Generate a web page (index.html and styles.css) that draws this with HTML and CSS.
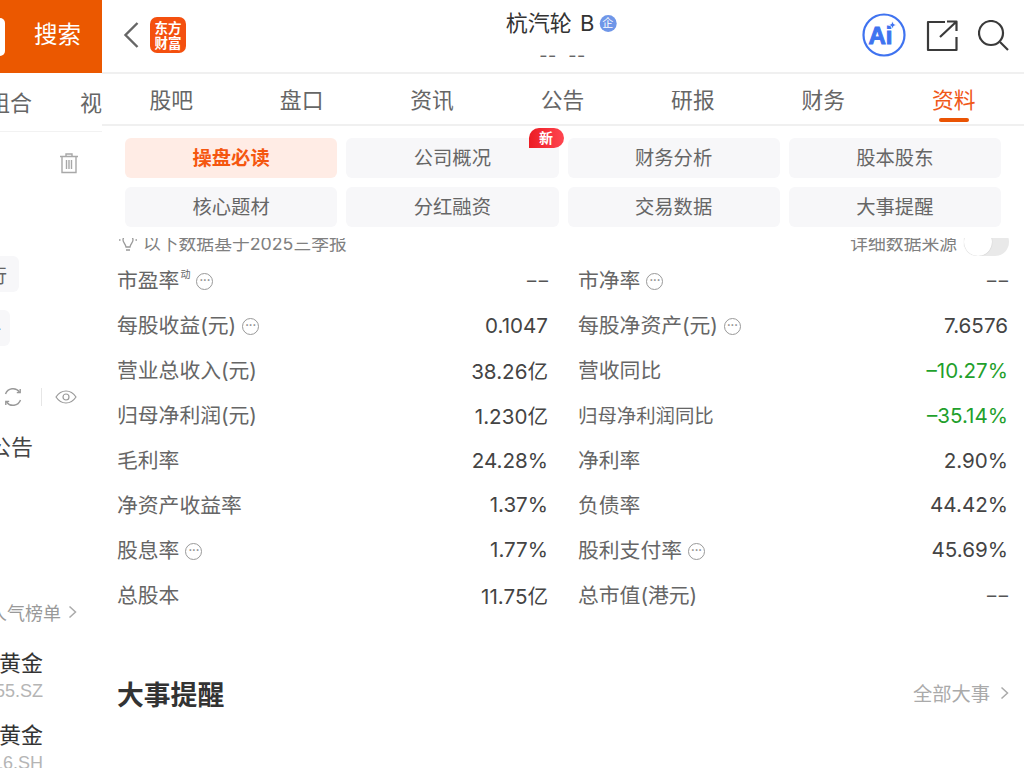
FILE: index.html
```html
<!DOCTYPE html>
<html lang="zh-CN">
<head>
<meta charset="utf-8">
<title>杭汽轮B</title>
<link rel="stylesheet" href="styles.css">
</head>
<body>
<div class="app">
  <aside class="side">
    <div class="side-head"><span class="side-field"></span><span class="side-search">搜索</span></div>
    <div class="side-tabs"><span class="side-tab-a">组合</span><span class="side-tab-b">视频</span></div>
    <div class="side-trash">
      <svg width="20" height="22" viewBox="0 0 20 22" fill="none" stroke="#a8a8a8" stroke-width="1.4"><path d="M1 4.500h18M7 4.500V2h6v2.500M3 4.500V20.500h14V4.500M7.500 8v9M10 8v9M12.500 8v9"/></svg>
    </div>
    <div class="side-chip side-chip-a"><span>银行</span></div>
    <div class="side-chip side-chip-b"><span>一</span></div>
    <div class="side-tools">
      <svg width="20" height="20" viewBox="0 0 20 20" fill="none" stroke="#999" stroke-width="1.400"><path d="M2.500 7A8 8 0 0 1 16.500 5M17.500 13A8 8 0 0 1 3.500 15"/><path d="M17.200 2v3.600h-3.400M2.800 18v-3.600h3.400"/></svg>
      <span class="side-divider"></span>
      <svg width="22" height="14" viewBox="0 0 22 14" fill="none" stroke="#9a9a9a" stroke-width="1.200"><path d="M1 7C4 2.500 7.500 1 11 1s7 1.500 10 6c-3 4.500-6.500 6-10 6S4 11.500 1 7z"/><circle cx="11" cy="7" r="3"/></svg>
    </div>
    <div class="side-title"><span>公告</span></div>
    <div class="side-rank"><span>人气榜单</span><svg width="9" height="14" viewBox="0 0 9 14" fill="none" stroke="#aaa" stroke-width="1.500"><path d="M1.500 1.500 7.500 7l-6 5.500"/></svg></div>
    <div class="side-stock"><span class="side-name">黄金</span><span class="side-code">159855.SZ</span></div>
    <div class="side-stock"><span class="side-name">黄金</span><span class="side-code">518716.SH</span></div>
  </aside>
  <main class="main">
    <header class="top">
      <div class="top-left">
        <svg class="back" width="16" height="28" viewBox="0 0 16 28" fill="none" stroke="#666" stroke-width="2.400"><path d="M14.500 2 2.500 14l12 12"/></svg>
        <span class="logo"><span>东方</span><span>财富</span></span>
      </div>
      <div class="top-center">
        <div class="stock-name"><span class="stock-text">杭汽轮 B</span><span class="qi">企</span></div>
        <div class="stock-sub">-- --</div>
      </div>
      <div class="top-right">
        <svg width="44" height="44" viewBox="0 0 44 44" fill="none"><circle cx="22" cy="22" r="20.500" stroke="#3f73f0" stroke-width="2.200"/><text x="6.500" y="31" font-family="Liberation Sans" font-weight="700" font-size="24" fill="#3f73f0" stroke="#3f73f0" stroke-width="1">Ai</text><path d="M30.500 8l1.200 2.800 2.800 1.200-2.800 1.200-1.200 2.800-1.200-2.800-2.800-1.200 2.800-1.200z" fill="#3f73f0" stroke="#fff" stroke-width=".8"/></svg>
        <svg width="32" height="32" viewBox="0 0 32 32" fill="none" stroke="#3a3a3a" stroke-width="2.200" stroke-linejoin="round"><path d="M19 2H2v28h28.500V17"/><path d="M14 17 30 2M21 1.500h9.500V11"/></svg>
        <svg width="32" height="32" viewBox="0 0 32 32" fill="none" stroke="#3a3a3a" stroke-width="2.200"><circle cx="13" cy="13" r="12"/><path d="M22 22l8 8"/></svg>
      </div>
    </header>
    <nav class="tabs">
      <span class="tab">股吧</span>
      <span class="tab">盘口</span>
      <span class="tab">资讯</span>
      <span class="tab">公告</span>
      <span class="tab">研报</span>
      <span class="tab">财务</span>
      <span class="tab tab-on">资料</span>
    </nav>
    <section class="chips">
      <span class="chip chip-on">操盘必读</span>
      <span class="chip chip-new">公司概况<span class="badge">新</span></span>
      <span class="chip">财务分析</span>
      <span class="chip">股本股东</span>
      <span class="chip">核心题材</span>
      <span class="chip">分红融资</span>
      <span class="chip">交易数据</span>
      <span class="chip">大事提醒</span>
    </section>
    <div class="note">
      <div class="note-inner">
        <div class="note-left">
          <svg width="20" height="22" viewBox="0 0 20 22" fill="none" stroke="#999" stroke-width="1.300"><path d="M5 9a5 5 0 0 1 10 0c0 2.500-2.500 3.500-3 7H8c-.5-3.500-3-4.500-3-7zM1 9h1.500M17.500 9H19M8 19h4"/></svg>
          <span>以下数据基于2025三季报</span>
        </div>
        <div class="note-right">
          <span>详细数据来源</span>
          <span class="switch"><span class="knob"></span></span>
        </div>
      </div>
    </div>
    <section class="grid">
      <div class="row"><span class="label">市盈率<sup class="sup">动</sup><i class="more"></i></span><span class="val val-dash">––</span></div>
      <div class="row"><span class="label">市净率<i class="more"></i></span><span class="val val-dash">––</span></div>
      <div class="row"><span class="label">每股收益(元)<i class="more"></i></span><span class="val">0.1047</span></div>
      <div class="row"><span class="label">每股净资产(元)<i class="more"></i></span><span class="val">7.6576</span></div>
      <div class="row"><span class="label">营业总收入(元)</span><span class="val">38.26亿</span></div>
      <div class="row"><span class="label">营收同比</span><span class="val val-down">–10.27%</span></div>
      <div class="row"><span class="label">归母净利润(元)</span><span class="val">1.230亿</span></div>
      <div class="row"><span class="label label-fit">归母净利润同比</span><span class="val val-down">–35.14%</span></div>
      <div class="row"><span class="label">毛利率</span><span class="val">24.28%</span></div>
      <div class="row"><span class="label">净利率</span><span class="val">2.90%</span></div>
      <div class="row"><span class="label">净资产收益率</span><span class="val">1.37%</span></div>
      <div class="row"><span class="label">负债率</span><span class="val">44.42%</span></div>
      <div class="row"><span class="label">股息率<i class="more"></i></span><span class="val">1.77%</span></div>
      <div class="row"><span class="label">股利支付率<i class="more"></i></span><span class="val">45.69%</span></div>
      <div class="row"><span class="label">总股本</span><span class="val">11.75亿</span></div>
      <div class="row"><span class="label">总市值(港元)</span><span class="val val-dash">––</span></div>
    </section>
    <section class="events">
      <h2 class="events-title">大事提醒</h2>
      <div class="events-all"><span>全部大事</span><svg width="9" height="14" viewBox="0 0 9 14" fill="none" stroke="#aaa" stroke-width="1.500"><path d="M1.500 1.500 7.500 7l-6 5.500"/></svg></div>
    </section>
  </main>
</div>
</body>
</html>
```
FILE: styles.css
```css
* { box-sizing: border-box; }
html, body { margin: 0; padding: 0; height: 100%; overflow: hidden; background: #fff; }
body { font-family: "Inter", "Noto Sans CJK SC", sans-serif; color: #333; }
.app { display: flex; width: 1024px; height: 768px; overflow: hidden; }

/* left, cut-off panel */
.side { width: 102px; flex: none; height: 768px; overflow: hidden; display: flex; flex-direction: column; }
.side > * { flex: none; }
.side-head { height: 73px; background: #eb5800; display: flex; align-items: center; }
.side-field { width: 5px; height: 38px; background: #fff; border-radius: 0 6px 6px 0; margin-right: 29px; }
.side-search { color: #fff; font-size: 23.500px; line-height: 28px; padding-bottom: 3px; white-space: nowrap; }
.side-tabs { height: 59px; border-bottom: 1px solid #f2f2f2; display: flex; font-size: 22px; color: #666; white-space: nowrap; overflow: hidden; justify-content: flex-end; padding-top: 12px; }
.side-tab-a { margin-right: 48px; }
.side-tab-b { margin-right: -22px; }
.side-trash { height: 124px; padding: 20px 0 0 59px; }
.side-chip { display: flex; justify-content: flex-end; background: #f7f7f9; border-radius: 0 6px 6px 0; height: 36px; align-items: center; font-size: 19px; color: #666; white-space: nowrap; overflow: hidden; }
.side-chip-a { width: 19px; padding-right: 12px; }
.side-chip-b { width: 10px; margin-top: 18px; padding-right: 9px; }
.side-chip span { flex: none; }
.side-tools { height: 24px; margin-top: 39px; display: flex; align-items: center; padding-left: 3px; }
.side-divider { width: 1px; height: 18px; background: #e6e6e6; margin: 0 13px 0 18px; }
.side-title { height: 36px; margin-top: 20px; display: flex; justify-content: flex-end; padding-right: 69px; font-size: 22px; line-height: 36px; color: #444; white-space: nowrap; }
.side-title span { flex: none; }
.side-rank { height: 28px; margin-top: 133px; display: flex; justify-content: flex-end; align-items: center; gap: 7px; padding-right: 25px; font-size: 18px; color: #999; white-space: nowrap; }
.side-rank span { flex: none; }
.side-rank svg { flex: none; }
.side-stock { height: 72px; display: flex; flex-direction: column; align-items: flex-end; padding-right: 59px; white-space: nowrap; }
.side-rank + .side-stock { margin-top: 22px; }
.side-name { font-size: 22px; line-height: 30px; color: #333; }
.side-code { font-family: "Liberation Sans", sans-serif; font-size: 18px; line-height: 26px; color: #b5b5b5; }

/* main */
.main { flex: 1; min-width: 0; height: 768px; overflow: hidden; }
.top { height: 74px; border-bottom: 2px solid #f0f0f0; position: relative; display: flex; justify-content: space-between; align-items: center; padding: 0 14px 2px 21px; }
.top-left { display: flex; align-items: center; gap: 11px; }
.back { display: block; }
.logo { width: 36px; height: 36px; background: #f4500f; border-radius: 7px; display: flex; flex-direction: column; align-items: center; justify-content: center; color: #fff; font-family: "Noto Sans CJK SC", sans-serif; font-weight: 700; font-size: 13.500px; line-height: 15px; }
.top-center { position: absolute; left: 459px; top: 8px; transform: translateX(-50%); white-space: nowrap; text-align: center; }
.stock-name { display: flex; align-items: center; font-size: 22px; line-height: 30px; color: #333; }
.stock-text { word-spacing: 2px; }
.qi { width: 17px; height: 17px; border-radius: 50%; background: #6f96e8; color: #fff; font-size: 11px; line-height: 17px; text-align: center; margin-left: 5px; }
.stock-sub { font-size: 18px; line-height: 22px; color: #666; letter-spacing: .5px; word-spacing: 6px; margin-top: 7px; padding-left: 3px; }
.top-right { display: flex; align-items: center; gap: 20px; }
.top-right svg:nth-child(n+2) { margin-top: 1px; }
.tabs { display: flex; height: 52px; padding: 0 5px 0 4px; border-bottom: 2px solid #f0f0f0; }
.tab { flex: 1; text-align: center; font-size: 21.800px; line-height: 52px; color: #666; position: relative; }
.tab-on { color: #f0591a; }
.tab-on::after { content: ""; position: absolute; left: 50%; bottom: 2px; width: 30px; height: 4px; margin-left: -15px; border-radius: 2px; background: #ea5404; }
.chips { display: grid; grid-template-columns: repeat(4, 1fr); gap: 9px; padding: 12px 23px 11px; }
.chip { height: 40px; display: flex; align-items: center; justify-content: center; padding-bottom: 2px; background: #f7f7f9; border-radius: 6px; font-size: 19.300px; color: #666; position: relative; }
.chip-on { background: #ffece5; color: #f5560f; font-weight: 700; }
.badge { position: absolute; right: -5px; top: -10px; width: 35px; height: 20px; background: linear-gradient(90deg, #ec1c24, #ff4650); color: #fff; font-size: 14px; font-weight: 700; line-height: 20px; text-align: center; border-radius: 10px 10px 10px 0; }
.note { height: 18px; overflow: hidden; padding: 0 15px 0 16px; font-size: 17.800px; color: #808080; }
.note-inner { height: 28px; margin-top: -10px; display: flex; justify-content: space-between; align-items: center; }
.note-left, .note-right { display: flex; align-items: center; gap: 5px; }
.note-right { gap: 7px; }
.switch { width: 45px; height: 28px; background: #e9e9e9; border-radius: 14px; position: relative; display: block; }
.knob { position: absolute; left: 0; top: 0; width: 28px; height: 28px; border-radius: 50%; background: #fff; box-shadow: 0 0 1px rgba(0,0,0,.25); }
.grid { display: grid; grid-template-columns: 430px 430px; column-gap: 30px; padding: 2px 16px 0; grid-auto-rows: 44.9px; }
.row { display: flex; justify-content: space-between; align-items: center; font-size: 20.800px; }
.label { color: #666; display: flex; align-items: center; white-space: nowrap; margin-left: -1px; padding-bottom: 2px; }
.row:nth-child(even) .label { margin-left: 0; }
.label-fit { font-size: 19.400px; }
.val { color: #444; font-size: 20.600px; white-space: nowrap; }
.val-down { color: #1fa02c; }
.val-dash { font-size: 18.500px; letter-spacing: 2.500px; margin-right: -2.500px; color: #555; }
.sup { font-size: 10px; line-height: 1; align-self: flex-start; margin-top: 5px; margin-left: 1px; }
.more { width: 17px; height: 17px; margin-left: 6px; margin-top: 5px; border: 1.300px solid #999; border-radius: 50%; position: relative; display: block; }
.more::after { content: "···"; position: absolute; inset: 0; font-style: normal; font-size: 11px; font-weight: 700; line-height: 13px; text-align: center; color: #888; letter-spacing: 0; }
.events { display: flex; justify-content: space-between; align-items: center; height: 40px; margin-top: 57px; padding: 0 15px 0 16px; }
.events-title { margin: 0 0 0 -1px; font-size: 26.800px; line-height: 40px; font-weight: 700; color: #333; font-family: "Noto Sans CJK SC", sans-serif; }
.events-all { display: flex; align-items: center; gap: 10px; font-size: 19.300px; color: #aaa; padding-bottom: 3px; }
```
